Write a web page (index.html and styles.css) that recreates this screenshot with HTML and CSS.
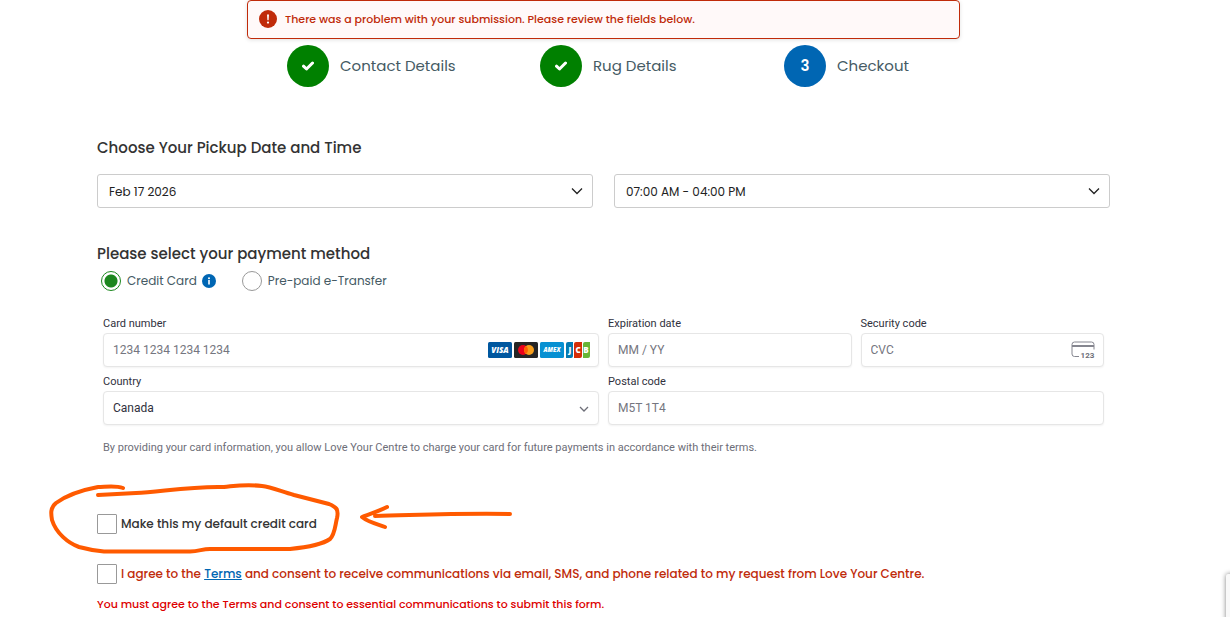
FILE: index.html
```html
<!DOCTYPE html>
<html lang="en">
  <head>
    <meta charset="UTF-8" />
    <meta name="viewport" content="width=device-width, initial-scale=1.0" />
    <title>Checkout</title>
    <link rel="stylesheet" href="styles.css">
  </head>
  <body>
    <main class="page">
      <div class="alert" role="alert">
        <svg class="alert-icon" viewBox="0 0 18 18" aria-hidden="true">
          <circle cx="9" cy="9" r="9" fill="#c02b0a" />
          <path d="M8 4.5h2l-.4 5.7H8.4z" fill="#fff" />
          <circle cx="9" cy="12.6" r="1.1" fill="#fff" />
        </svg>
        <span>There was a problem with your submission. Please review the fields below.</span>
      </div>

      <ol class="steps">
        <li class="step done">
          <span class="step-number">
            <svg viewBox="0 0 12 10" aria-hidden="true"><path d="M1.5 5.2l3 2.8 6-6" /></svg>
          </span>
          <span>Contact Details</span>
        </li>
        <li class="step done">
          <span class="step-number">
            <svg viewBox="0 0 12 10" aria-hidden="true"><path d="M1.5 5.2l3 2.8 6-6" /></svg>
          </span>
          <span>Rug Details</span>
        </li>
        <li class="step active">
          <span class="step-number">3</span>
          <span>Checkout</span>
        </li>
      </ol>

      <form>
        <h2>Choose Your Pickup Date and Time</h2>
        <div class="pickup">
          <div class="select-wrap">
            <select aria-label="Pickup date">
              <option>Feb 17 2026</option>
            </select>
            <svg class="chevron" viewBox="0 0 12 12" aria-hidden="true"><path d="M1 3.5l5 5 5-5" /></svg>
          </div>
          <div class="select-wrap">
            <select aria-label="Pickup time">
              <option>07:00 AM - 04:00 PM</option>
            </select>
            <svg class="chevron" viewBox="0 0 12 12" aria-hidden="true"><path d="M1 3.5l5 5 5-5" /></svg>
          </div>
        </div>

        <h2 class="payment-title">Please select your payment method</h2>
        <div class="methods">
          <input type="radio" name="method" id="credit" checked />
          <label for="credit">Credit Card</label>
          <svg class="info" viewBox="0 0 14 14" aria-hidden="true">
            <circle cx="7" cy="7" r="7" fill="#0066b3" />
            <circle cx="7" cy="4.2" r="1" fill="#fff" />
            <path d="M6.2 6h1.6v4.5H6.2z" fill="#fff" />
          </svg>
          <input type="radio" name="method" id="transfer" />
          <label for="transfer">Pre-paid e-Transfer</label>
        </div>

        <div class="card-form">
          <div class="field wide">
            <label for="number">Card number</label>
            <div class="input-wrap">
              <input type="text" id="number" placeholder="1234 1234 1234 1234" />
              <div class="brands">
                <svg viewBox="0 0 24 16" aria-hidden="true">
                  <rect width="24" height="16" rx="1.5" fill="#00579f" />
                  <text x="12" y="11.2" class="brand-text visa">VISA</text>
                </svg>
                <svg viewBox="0 0 24 16" aria-hidden="true">
                  <rect width="24" height="16" rx="1.5" fill="#252525" />
                  <circle cx="9" cy="8" r="5" fill="#eb001b" />
                  <circle cx="15" cy="8" r="5" fill="#f79e1b" />
                  <path d="M12 4a5 5 0 0 1 0 8 5 5 0 0 1 0-8z" fill="#ff5f00" />
                </svg>
                <svg viewBox="0 0 24 16" aria-hidden="true">
                  <rect width="24" height="16" rx="1.5" fill="#0690d2" />
                  <text x="12" y="10.2" class="brand-text amex">AMEX</text>
                </svg>
                <svg viewBox="0 0 24 16" aria-hidden="true">
                  <path d="M2 0h5v14a2 2 0 0 1-2 2H0V2a2 2 0 0 1 2-2z" fill="#047ab1" />
                  <path d="M10 0h6v14a2 2 0 0 1-2 2H8V2a2 2 0 0 1 2-2z" fill="#d42d06" />
                  <path d="M19 0h5v14a2 2 0 0 1-2 2h-5V2a2 2 0 0 1 2-2z" fill="#67b637" />
                  <text x="4" y="11" class="brand-text jcb">J</text>
                  <text x="12" y="11" class="brand-text jcb">C</text>
                  <text x="20" y="11" class="brand-text jcb">B</text>
                </svg>
              </div>
            </div>
          </div>
          <div class="field">
            <label for="expiry">Expiration date</label>
            <input type="text" id="expiry" placeholder="MM / YY" />
          </div>
          <div class="field">
            <label for="cvc">Security code</label>
            <div class="input-wrap">
              <input type="text" id="cvc" placeholder="CVC" />
              <svg class="cvc-icon" viewBox="0 0 24 18" aria-hidden="true">
                <path d="M8 15.5H3.5A2.5 2.5 0 0 1 1 13V3.5A2.5 2.5 0 0 1 3.5 1h17A2.5 2.5 0 0 1 23 3.5v5" />
                <path d="M1 5h22" class="stripe" />
                <text x="16.5" y="16.5">123</text>
              </svg>
            </div>
          </div>
          <div class="field wide">
            <label for="country">Country</label>
            <div class="input-wrap">
              <select id="country">
                <option>Canada</option>
              </select>
              <svg class="chevron small" viewBox="0 0 12 12" aria-hidden="true"><path d="M2 4l4 4 4-4" /></svg>
            </div>
          </div>
          <div class="field wide">
            <label for="postal">Postal code</label>
            <input type="text" id="postal" placeholder="M5T 1T4" />
          </div>
        </div>
        <p class="note">By providing your card information, you allow Love Your Centre to charge your card for future payments in accordance with their terms.</p>

        <div class="check">
          <input type="checkbox" id="default-card" />
          <label for="default-card">Make this my default credit card</label>
        </div>
        <div class="check invalid">
          <input type="checkbox" id="terms" />
          <label for="terms">I agree to the <a href="#">Terms</a> and consent to receive communications via email, SMS, and phone related to my request from Love Your Centre.</label>
        </div>
        <p class="error">You must agree to the Terms and consent to essential communications to submit this form.</p>
      </form>
    </main>

    <svg class="markup" viewBox="0 0 480 80" aria-hidden="true">
      <path d="M83 8C75 5 65 7 58 7C42 10 27 15 16 23C10 28 11 34 12 40C16 53 28 63 39 67C50 70 58 71 64 71.500L150 71.500C160 71 162 69 170 69L250 69C270 67 283 64 290 59C295 54 295 46 297 38C299 29 296 27 289 24L254 15C240 11 231 7 222 6C205 4 195 6 184 7C150 6 120 12 96 13L58 15" />
      <path d="M470 34C420 33 380 35 335 36M347 27C339 31 330 34 322 37C328 42 337 44 345 47" />
    </svg>
    <div class="badge"></div>
  </body>
</html>
```
FILE: styles.css
```css
* {
  box-sizing: border-box;
  margin: 0;
  padding: 0;
}
body {
  font-family: Poppins, Inter, sans-serif;
  font-size: 12px;
  line-height: 20px;
  color: #333;
  background-color: #fff;
}
.page {
  padding: 0 120px 0 97px;
}
.alert {
  display: flex;
  align-items: center;
  gap: 8px;
  margin: 0 150px 6px;
  padding: 8px 11px 9px;
  border: 1px solid #c02b0a;
  border-radius: 4px;
  background-color: #fff9f9;
  box-shadow: 0 1px 4px rgba(0, 0, 0, .12);
  color: #c02b0a;
  font-size: 11px;
  font-weight: 500;
}
.alert-icon {
  width: 18px;
  height: 18px;
}

/* progress steps */
.steps {
  display: grid;
  grid-template-columns: 253fr 244fr 126fr;
  margin: 0 200px 48px 190px;
  list-style: none;
}
.step {
  display: flex;
  align-items: center;
  gap: 11px;
  color: #455a64;
  font-size: 15px;
  white-space: nowrap;
}
.step-number {
  display: flex;
  align-items: center;
  justify-content: center;
  width: 42px;
  height: 42px;
  border-radius: 50%;
  background-color: #0066b3;
  color: #fff;
  font-weight: 600;
}
.done .step-number {
  background-color: #008000;
}
.step-number svg {
  width: 12px;
  height: 10px;
  fill: none;
  stroke: #fff;
  stroke-width: 3;
  stroke-linecap: round;
  stroke-linejoin: round;
}

h2 {
  font-size: 15px;
  font-weight: 500;
  line-height: 26px;
}
.pickup {
  display: grid;
  grid-template-columns: 1fr 1fr;
  gap: 21px;
  margin: 13px 0 33px;
}
.select-wrap,
.input-wrap {
  position: relative;
}
select {
  appearance: none;
  width: 100%;
  height: 34px;
  padding: 0 11px;
  border: 1px solid #ccc;
  border-radius: 3px;
  background-color: #fff;
  color: #212121;
  font-family: inherit;
  font-size: 12px;
}
.chevron {
  position: absolute;
  top: 11px;
  right: 10px;
  width: 12px;
  height: 12px;
  fill: none;
  stroke: #222;
  stroke-width: 1.3;
  pointer-events: none;
}
.chevron.small {
  top: 12px;
  right: 9px;
  stroke: #6d6e78;
}

/* payment method */
.methods {
  display: flex;
  align-items: center;
  margin: 4px 0 26px 4px;
  color: #455a64;
}
.methods label {
  margin-left: 6px;
}
.methods input {
  appearance: none;
  width: 20px;
  height: 20px;
  border: 1px solid #999;
  border-radius: 50%;
}
.methods input:checked {
  border-color: #1c871e;
  background: radial-gradient(circle, #1c871e 6px, transparent 7px);
}
.info {
  width: 14px;
  height: 14px;
  margin: 0 26px 0 5px;
}

.card-form {
  display: grid;
  grid-template-columns: repeat(4, 1fr);
  gap: 8px 9px;
  padding: 0 6px;
  font-family: "Segoe UI", Roboto, sans-serif;
}
.wide {
  grid-column: span 2;
}
.field label {
  display: block;
  color: #30313d;
  font-size: 11px;
  line-height: 14px;
  margin-bottom: 2px;
}
.field input,
.field select {
  display: block;
  width: 100%;
  height: 34px;
  padding: 0 9px;
  border: 1px solid #e6e6e6;
  border-radius: 4px;
  background-color: #fff;
  box-shadow: 0 1px 2px rgba(0, 0, 0, .05);
  color: #30313d;
  font-family: inherit;
  font-size: 12px;
}
.field input::placeholder {
  color: #757680;
}
.brands {
  position: absolute;
  top: 9px;
  right: 9px;
  display: flex;
  gap: 2px;
}
.brands svg {
  width: 24px;
  height: 16px;
}
.brand-text {
  fill: #fff;
  font-family: "Open Sans", sans-serif;
  font-weight: 800;
  font-style: italic;
  text-anchor: middle;
}
.visa {
  font-size: 8px;
}
.amex {
  font-size: 6px;
}
.jcb {
  font-size: 8px;
  font-style: normal;
}
.cvc-icon {
  position: absolute;
  top: 8px;
  right: 9px;
  width: 24px;
  height: 18px;
  fill: none;
  stroke: #85868f;
}
.cvc-icon .stripe {
  stroke-width: 2;
}
.cvc-icon text {
  fill: #6d6e78;
  stroke: none;
  font-size: 8px;
  font-weight: 700;
  text-anchor: middle;
}
.note {
  margin: 13px 6px 56px;
  color: #6d6e78;
  font-family: "Segoe UI", Roboto, sans-serif;
  font-size: 11px;
}

.check {
  display: flex;
  align-items: center;
  gap: 4px;
  margin-bottom: 30px;
  font-weight: 500;
}
.check input {
  appearance: none;
  width: 20px;
  height: 20px;
  border: 1px solid #999;
  border-radius: 1px;
}
.check a {
  color: #0066b3;
}
.invalid {
  margin-bottom: 10px;
  color: #c02b0a;
}
.error {
  color: #dd0000;
  font-size: 11px;
  font-weight: 500;
}

/* hand drawn circle and arrow */
.markup {
  position: absolute;
  top: 480px;
  left: 40px;
  width: 480px;
  height: 80px;
  fill: none;
  stroke: #ff5a00;
  stroke-width: 4;
  stroke-linecap: round;
  stroke-linejoin: round;
  pointer-events: none;
}
.badge {
  position: fixed;
  right: -252px;
  bottom: -17px;
  width: 256px;
  height: 60px;
  border-radius: 2px;
  background-color: #f9f9f9;
  box-shadow: 0 0 5px gray;
}
```
